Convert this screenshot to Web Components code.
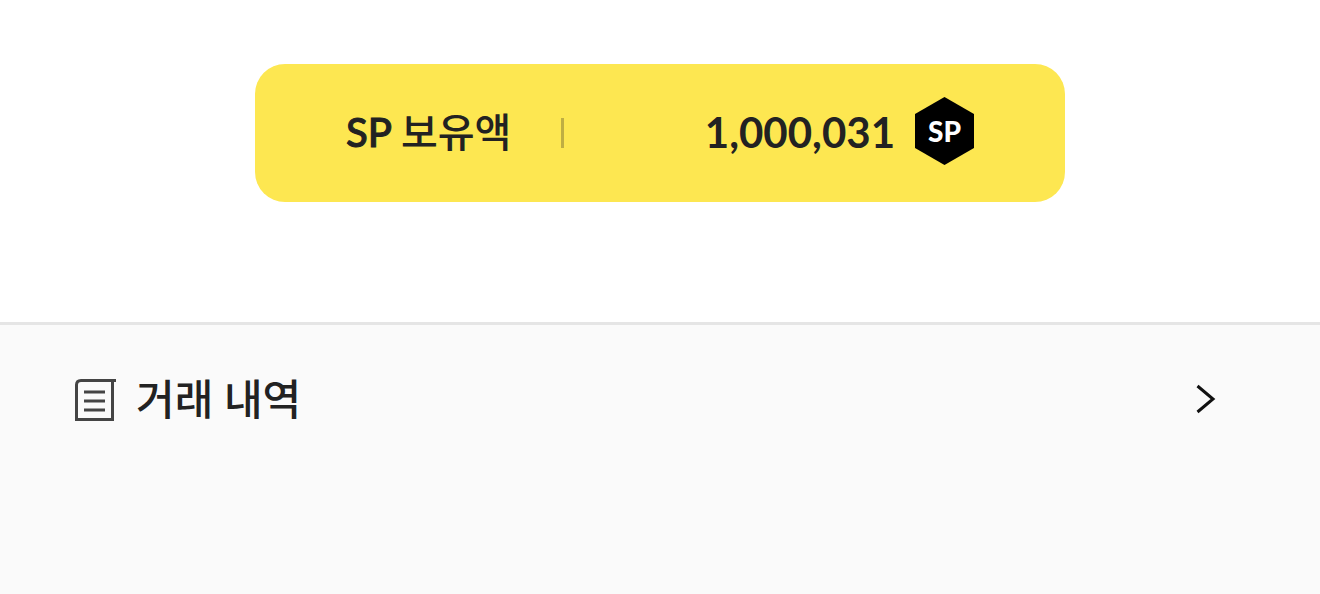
<!DOCTYPE html>
<html lang="ko">
<head>
<meta charset="utf-8">
<meta name="viewport" content="width=device-width, initial-scale=1">
<title>SP 보유액</title>
<style>
  body { margin: 0; background: #fff; color: #222; font-family: Lato, "Noto Sans CJK KR", sans-serif; }
  .unit { -webkit-text-stroke: 1px currentColor; }
</style>
</head>
<body>
<wallet-page>
  <balance-card amount="1,000,031"><span slot="label"><span class="unit">SP</span> 보유액</span><sp-badge>SP</sp-badge></balance-card>
  <menu-link slot="menu" href="#history">거래 내역</menu-link>
</wallet-page>
<script>
class WalletPage extends HTMLElement {
  constructor() {
    super();
    this.attachShadow({ mode: 'open' }).innerHTML = `
      <style>
        :host { display: flex; flex-direction: column; min-height: 100vh; }
        header { padding: 64px 24px 120px; }
        main { flex: 1; background: #fafafa; border-top: 3px solid #e5e5e5; }
      </style>
      <header><slot></slot></header>
      <main><slot name="menu"></slot></main>`;
  }
}
class BalanceCard extends HTMLElement {
  constructor() {
    super();
    this.attachShadow({ mode: 'open' }).innerHTML = `
      <style>
        :host { display: flex; align-items: center; box-sizing: border-box; max-width: 810px; min-height: 138px;
          margin: 0 auto; padding: 0 91px; border-radius: 30px; background: #fde751; }
        .label { flex: none; width: 164px; padding-bottom: 2px; font-size: 40px; line-height: 60px; font-weight: 500; white-space: nowrap; }
        .rule { width: 3px; height: 30px; margin-left: 51px; background: #bfae42; }
        .amount { flex: 1; text-align: right; margin-right: 20px; padding-bottom: 2px; font-weight: 700; font-size: 42px; line-height: 60px; }
      </style>
      <span class="label"><slot name="label"></slot></span><span class="rule"></span><span class="amount"></span><slot></slot>`;
  }
  connectedCallback() {
    this.shadowRoot.querySelector('.amount').textContent = this.getAttribute('amount');
  }
}
class SpBadge extends HTMLElement {
  constructor() {
    super();
    this.attachShadow({ mode: 'open' }).innerHTML = `
      <style>
        :host { display: grid; place-items: center; flex: none; width: 59px; height: 68px; margin-bottom: 4px;
          background: #000; color: #fff; clip-path: polygon(50% 0, 100% 25%, 100% 75%, 50% 100%, 0 75%, 0 25%);
          font-weight: 900; font-size: 28px; line-height: 32px; }
      </style>
      <span><slot></slot></span>`;
  }
}
class MenuLink extends HTMLElement {
  constructor() {
    super();
    this.attachShadow({ mode: 'open' }).innerHTML = `
      <style>
        :host { display: block; }
        a { display: flex; align-items: center; gap: 20px; padding: 42px 104px 42px 74px; color: inherit; text-decoration: none;
          font-size: 42px; line-height: 64px; font-weight: 500; }
        span { flex: 1; }
        svg { flex: none; display: block; }
        .doc { margin-top: 2px; }
      </style>
      <a>
        <svg class="doc" width="42" height="44" viewBox="0 0 42 44" fill="none" stroke="#444" stroke-width="3" aria-hidden="true">
          <path d="M42 2.5H7Q2.500 2.500 2.500 7V41.500H38.500V2.500"/>
          <path d="M10 14H31M10 23H31M10 32H31"/>
        </svg>
        <span><slot></slot></span>
        <svg width="20" height="30" viewBox="0 0 20 30" fill="none" stroke="#111" stroke-width="3" aria-hidden="true">
          <path d="M1.500 2L17 15L1.500 28"/>
        </svg>
      </a>`;
  }
  connectedCallback() {
    this.shadowRoot.querySelector('a').href = this.getAttribute('href');
  }
}
customElements.define('wallet-page', WalletPage);
customElements.define('balance-card', BalanceCard);
customElements.define('sp-badge', SpBadge);
customElements.define('menu-link', MenuLink);
</script>
</body>
</html>
